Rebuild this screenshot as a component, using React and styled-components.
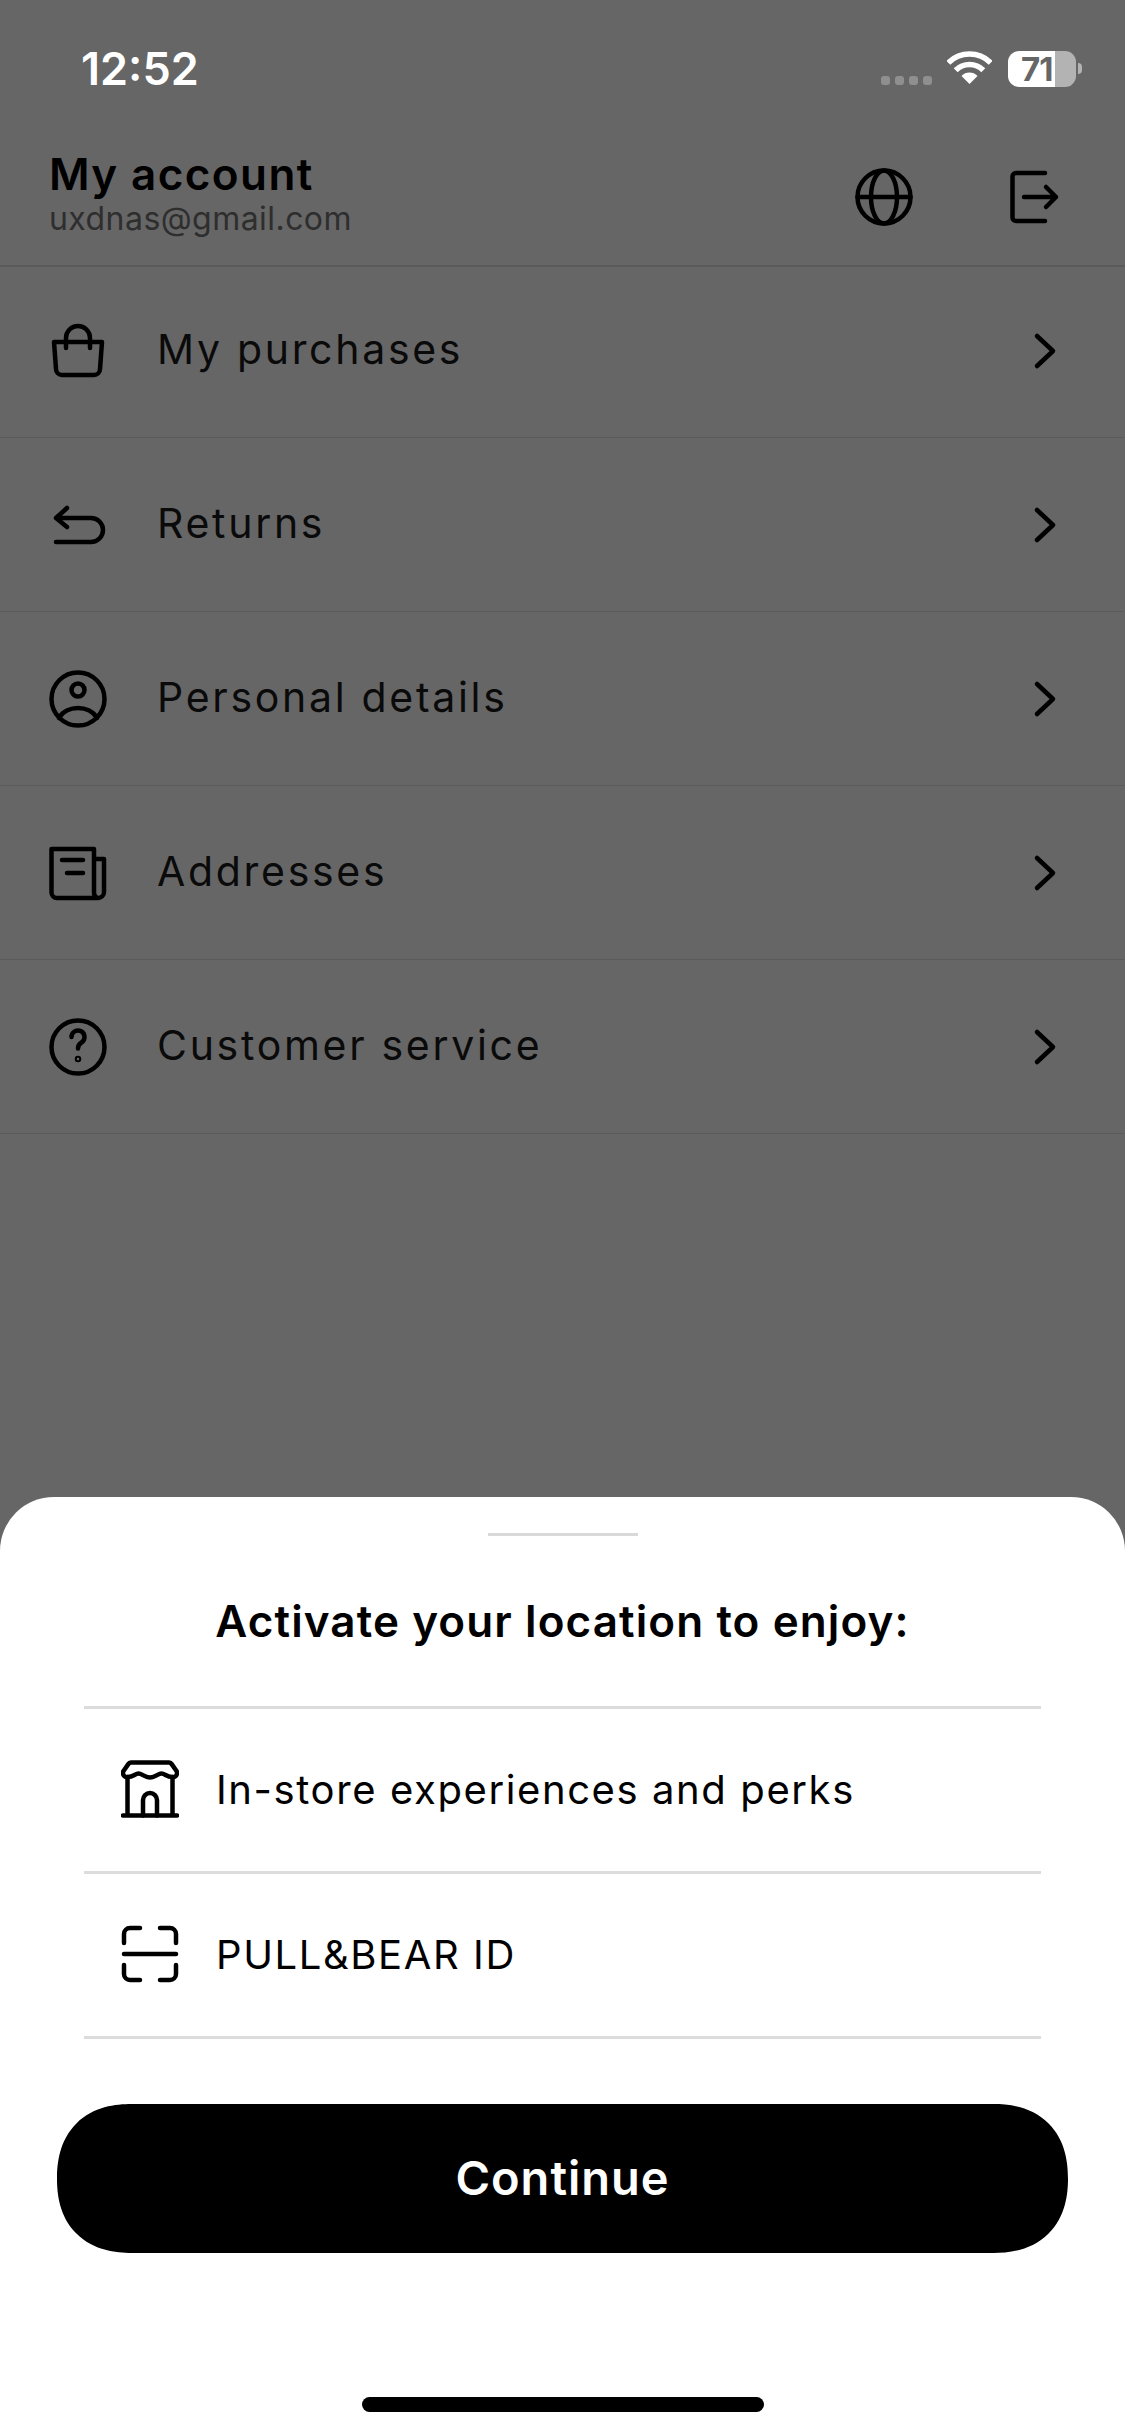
import React from 'react'
import styled, { createGlobalStyle } from 'styled-components'

const GlobalStyle = createGlobalStyle`
  html, body {
    margin: 0;
    padding: 0;
    background: #666;
  }
  * {
    box-sizing: border-box;
  }
`

const Page = styled.div`
  width: 1125px;
  height: 2436px;
  background: #666;
  display: flex;
  flex-direction: column;
  overflow: hidden;
  font-family: Inter, 'Liberation Sans', sans-serif;
  color: #000;
`

const StatusBar = styled.div`
  height: 100px;
  padding: 47px 43px 0 81px;
  display: flex;
  justify-content: space-between;
  align-items: flex-start;
`

const Time = styled.span`
  font-size: 45px;
  line-height: 44px;
  font-weight: 600;
  color: #fff;
`

const StatusIcons = styled.div`
  display: flex;
  align-items: flex-start;
  margin-top: 4px;
`

const SignalDots = styled.div`
  display: flex;
  gap: 5px;
  margin: 25px 15px 0 0;
`

const Dot = styled.span`
  width: 9px;
  height: 9px;
  border-radius: 3px;
  background: #8f8f8f;
`

const Battery = styled.div`
  width: 68px;
  height: 36px;
  margin-left: 16px;
  border-radius: 11px;
  background: linear-gradient(90deg, #fff 0 47px, #b3b3b3 47px);
  color: #666;
  font-size: 33px;
  line-height: 36px;
  font-weight: 700;
  padding-left: 13px;
  letter-spacing: -1px;
`

const BatteryNub = styled.span`
  width: 4px;
  height: 11px;
  margin: 12px 0 0 2px;
  border-radius: 0 4px 4px 0;
  background: #b3b3b3;
`

const Header = styled.header`
  position: relative;
  height: 164px;
  padding: 0 62px 0 49px;
  display: flex;
  justify-content: space-between;
  box-shadow: 0 1px 0 #666, 0 3px 0 #5a5a5a;
`

const HeaderText = styled.div`
  padding-top: 50px;
`

const Title = styled.h1`
  margin: 0;
  font-size: 44px;
  line-height: 48px;
  font-weight: 600;
  letter-spacing: 1.4px;
`

const Email = styled.div`
  margin-top: 2px;
  font-size: 32px;
  line-height: 38px;
  letter-spacing: 0.45px;
  color: #2e2e2e;
`

const HeaderIcons = styled.div`
  display: flex;
  gap: 92px;
  padding-top: 68px;
`

const Row = styled.div`
  height: 174px;
  padding: 0 62px 0 49px;
  display: flex;
  align-items: center;
  border-bottom: 1px solid #5b5b5b;
`

const RowLabel = styled.span`
  flex: 1;
  margin-left: 50px;
  padding-bottom: 3px;
  font-size: 41px;
  letter-spacing: 2.7px;
  color: #0a0a0a;
`

const Icon = styled.svg`
  flex: none;
  width: ${props => props.size || 58}px;
  height: ${props => props.size || 58}px;
  fill: none;
  stroke: #000;
  stroke-width: ${props => props.weight || 4.5};
  stroke-linecap: round;
  stroke-linejoin: round;
`

const Chevron = styled.svg`
  width: 24px;
  height: 38px;
  margin-right: 6px;
  fill: none;
  stroke: #000;
  stroke-width: 4.5;
  stroke-linecap: round;
  stroke-linejoin: round;
`

const Sheet = styled.section`
  margin-top: auto;
  height: 939px;
  background: #fff;
  border-radius: 54px 54px 0 0;
  display: flex;
  flex-direction: column;
  align-items: center;
`

const Handle = styled.div`
  width: 150px;
  height: 3px;
  margin-top: 36px;
  background: #d9d9d9;
`

const SheetTitle = styled.h2`
  margin: 0;
  height: 170px;
  display: flex;
  align-items: center;
  font-size: 44px;
  font-weight: 600;
  letter-spacing: 1.1px;
`

const Benefits = styled.div`
  width: 957px;
  border-top: 3px solid #dcdcdc;
`

const Benefit = styled.div`
  height: 165px;
  padding-left: 37px;
  padding-bottom: 2px;
  display: flex;
  align-items: center;
  gap: 37px;
  border-bottom: 3px solid #dcdcdc;
  font-size: 40px;
  letter-spacing: 1.6px;
`

const ContinueButton = styled.button`
  width: 1011px;
  height: 149px;
  margin-top: 65px;
  padding: 0 0 3px;
  border: 0;
  border-radius: 75px;
  corner-shape: superellipse(1.2);
  background: #000;
  color: #fff;
  font-family: inherit;
  font-size: 47px;
  font-weight: 600;
  letter-spacing: 1px;
`

const HomeBar = styled.div`
  width: 402px;
  height: 15px;
  margin: auto 0 24px;
  border-radius: 8px;
  background: #000;
`

const menuItems = [
  {
    label: 'My purchases',
    icon: (
      <>
        <path d="M5 20H53L51 47a6 6 0 0 1-6 6H13a6 6 0 0 1-6-6Z" />
        <path d="M17 26V16a12 12 0 0 1 24 0V26" />
      </>
    ),
  },
  {
    label: 'Returns',
    icon: <path d="M18 12 7 22 18 31M7 22H42a12 12 0 0 1 0 24H7" />,
  },
  {
    label: 'Personal details',
    icon: (
      <>
        <circle cx="29" cy="29" r="26.5" />
        <circle cx="29" cy="20" r="6.5" />
        <path d="M10 48C14 41 22 38 29 38S44 41 48 48" />
      </>
    ),
  },
  {
    label: 'Addresses',
    icon: (
      <>
        <path d="M45 15H55V48a6 6 0 0 1-6 6H8a5.500 5.500 0 0 1-5.500-5.500V5H45V48a6 6 0 0 0 4 6" />
        <path d="M13 16H34M18 29H34" />
      </>
    ),
  },
  {
    label: 'Customer service',
    icon: (
      <>
        <circle cx="29" cy="29" r="26.500" />
        <path d="M22.500 19a6.500 6.500 0 1 1 10 5.500c-2.500 1.500-3.500 3-3.500 6" />
        <circle cx="29" cy="41" r="1" />
      </>
    ),
  },
]

function WifiIcon() {
  return (
    <svg width="45" height="33" viewBox="0 0 45 33">
      <path d="M1.300 11.800A30 30 0 0 1 43.700 11.800" fill="none" stroke="#fff" strokeWidth="5.500" />
      <path d="M8.700 19.200A19.500 19.500 0 0 1 36.300 19.200" fill="none" stroke="#fff" strokeWidth="5.500" />
      <path d="M22.500 33 14.500 25A11 11 0 0 1 30.500 25Z" fill="#fff" />
    </svg>
  )
}

export default function App() {
  return (
    <Page>
      <GlobalStyle />
      <StatusBar>
        <Time>12:52</Time>
        <StatusIcons>
          <SignalDots>
            <Dot />
            <Dot />
            <Dot />
            <Dot />
          </SignalDots>
          <WifiIcon />
          <Battery>71</Battery>
          <BatteryNub />
        </StatusIcons>
      </StatusBar>

      <Header>
        <HeaderText>
          <Title>My account</Title>
          <Email>uxdnas@gmail.com</Email>
        </HeaderText>
        <HeaderIcons>
          <Icon viewBox="0 0 58 58">
            <circle cx="29" cy="29" r="26.500" />
            <ellipse cx="29" cy="29" rx="13" ry="26.500" />
            <path d="M2.500 29H55.500" />
          </Icon>
          <Icon viewBox="0 0 58 58">
            <path d="M40 5H11a3.500 3.500 0 0 0-3.500 3.500V49.500A3.500 3.500 0 0 0 11 53H40" />
            <path d="M19 29H51M41 19 51 29 41 39" />
          </Icon>
        </HeaderIcons>
      </Header>

      {menuItems.map(item => (
        <Row key={item.label}>
          <Icon viewBox="0 0 58 58">{item.icon}</Icon>
          <RowLabel>{item.label}</RowLabel>
          <Chevron viewBox="0 0 24 38">
            <path d="M4 4 20 19 4 34" />
          </Chevron>
        </Row>
      ))}

      <Sheet>
        <Handle />
        <SheetTitle>Activate your location to enjoy:</SheetTitle>
        <Benefits>
          <Benefit>
            <Icon viewBox="0 0 58 58" weight="4.5">
              <path d="M10 2.500H48a3 3 0 0 1 2.700 1.600L55.500 11a4 4 0 0 1-3.500 6C46 17.500 44 13.500 40.500 13.500S34.500 17.500 29 17.500 21 13.500 17.500 13.500 12 17.500 6 17a4 4 0 0 1-3.500-6L7.300 4.100A3 3 0 0 1 10 2.500Z" />
              <path d="M6.500 17V55.500M51.500 17V55.500M2 55.500H56" />
              <path d="M22 55.500V40a7 7 0 0 1 14 0V55.500" />
            </Icon>
            <span>In-store experiences and perks</span>
          </Benefit>
          <Benefit>
            <Icon viewBox="0 0 58 58" weight="4.5">
              <path d="M3 18V9a6 6 0 0 1 6-6H19M39 3H49a6 6 0 0 1 6 6V18" />
              <path d="M3 29H55" />
              <path d="M3 40V49a6 6 0 0 0 6 6H19M39 55H49a6 6 0 0 0 6-6V40" />
            </Icon>
            <span>PULL&amp;BEAR ID</span>
          </Benefit>
        </Benefits>
        <ContinueButton>Continue</ContinueButton>
        <HomeBar />
      </Sheet>
    </Page>
  )
}
